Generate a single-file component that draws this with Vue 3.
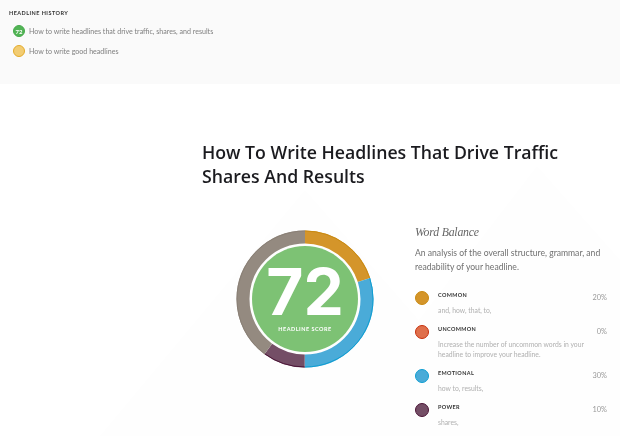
<script setup>
// Word balance data for the analysed headline
const history = [
  { score: '72', text: 'How to write headlines that drive traffic, shares, and results', tone: 'good' },
  { score: '', text: 'How to write good headlines', tone: 'okay' }
]

const words = [
  { name: 'COMMON', hint: ['and, how, that, to,'], pct: '20%', fill: '#d4952a', edge: '#c98a12' },
  { name: 'UNCOMMON', hint: ['Increase the number of uncommon words in your', 'headline to improve your headline.'], pct: '0%', fill: '#df6f4b', edge: '#c7300c' },
  { name: 'EMOTIONAL', hint: ['how to, results,'], pct: '30%', fill: '#4aabd8', edge: '#0e9ed2' },
  { name: 'POWER', hint: ['shares,'], pct: '10%', fill: '#744e66', edge: '#4b1436' }
]

// Ring segments, in percent of the circle, clockwise from the top
const radius = 62
const rimRadius = 68
const ring = [
  { color: '#d4952a', edge: '#c98a12', start: 0, size: 20 },
  { color: '#4aabd8', edge: '#0e9ed2', start: 20, size: 30 },
  { color: '#744e66', edge: '#4b1436', start: 50, size: 10 },
  { color: '#948a80', edge: '#8a8076', start: 60, size: 40 }
]
const dash = (seg, r) => `${(seg.size / 100) * 2 * Math.PI * r} ${2 * Math.PI * r}`
const offset = (seg, r) => -(seg.start / 100) * 2 * Math.PI * r
</script>

<template>
  <div class="page">
    <svg class="backdrop" viewBox="0 0 620 436" aria-hidden="true">
      <polygon points="100,436 305,190 520,436" fill="#fefefe" />
      <polygon points="330,436 537,166 620,260 620,436" fill="#fefefe" />
    </svg>

    <header class="history">
      <h4 class="history-title">HEADLINE HISTORY</h4>
      <ul class="history-list">
        <li v-for="item in history" :key="item.text" class="history-row">
          <span class="badge" :class="item.tone">{{ item.score }}</span>
          <span>{{ item.text }}</span>
        </li>
      </ul>
    </header>

    <main class="result">
      <h1 class="headline">How To Write Headlines That Drive Traffic<br />Shares And Results</h1>

      <div class="panels">
        <div class="score">
          <svg class="donut" width="138" height="138" viewBox="0 0 138 138">
            <circle cx="69" cy="69" r="53" fill="#7dc274" />
            <g v-for="seg in ring" :key="seg.color" fill="none" transform="rotate(-90 69 69)">
              <circle
                cx="69"
                cy="69"
                :r="radius"
                :stroke="seg.color"
                stroke-width="13"
                :stroke-dasharray="dash(seg, radius)"
                :stroke-dashoffset="offset(seg, radius)"
              />
              <circle
                cx="69"
                cy="69"
                :r="rimRadius"
                :stroke="seg.edge"
                stroke-width="1"
                :stroke-dasharray="dash(seg, rimRadius)"
                :stroke-dashoffset="offset(seg, rimRadius)"
              />
            </g>
          </svg>
          <div class="score-label">
            <span class="score-value">72</span>
            <span class="score-caption">HEADLINE SCORE</span>
          </div>
        </div>

        <section class="balance">
          <h2 class="balance-title">Word Balance</h2>
          <p class="balance-intro">An analysis of the overall structure, grammar, and readability of your headline.</p>
          <div v-for="word in words" :key="word.name" class="word">
            <span class="dot" :style="{ background: word.fill, borderColor: word.edge }"></span>
            <div class="word-body">
              <div class="word-name">{{ word.name }}</div>
              <div class="word-hint">
                <div v-for="line in word.hint" :key="line">{{ line }}</div>
              </div>
            </div>
            <span class="word-pct">{{ word.pct }}</span>
          </div>
        </section>
      </div>
    </main>
  </div>
</template>

<style>
html, body {
  margin: 0;
  background: #ffffff;
  overflow: hidden;
}
</style>

<style scoped>
.page {
  position: relative;
  width: 620px;
  height: 436px;
  overflow: hidden;
  font-family: Lato, "Open Sans", sans-serif;
  background: #ffffff;
  filter: blur(0.35px);
}

.backdrop {
  position: absolute;
  left: 0;
  top: 0;
  width: 620px;
  height: 436px;
}

/* History strip */
.history {
  position: relative;
  height: 84px;
  box-sizing: border-box;
  padding: 10px 9px 0;
  background: #fafafa;
}

.history-title {
  margin: 0 0 8px;
  font-size: 5.5px;
  line-height: 7px;
  font-weight: 700;
  letter-spacing: 0.45px;
  color: #333333;
}

.history-list {
  list-style: none;
  margin: 0;
  padding: 0 0 0 4px;
}

.history-row {
  display: flex;
  align-items: center;
  gap: 4px;
  height: 12px;
  margin-bottom: 8px;
  font-size: 7.1px;
  color: #808080;
}

.badge {
  display: flex;
  align-items: center;
  justify-content: center;
  box-sizing: border-box;
  width: 12px;
  height: 12px;
  border-radius: 50%;
  font-size: 6px;
  font-weight: 700;
  color: #ffffff;
}

.badge.good {
  background: #52b455;
  border: 1px solid #46aa4c;
}

.badge.okay {
  background: #f2cc72;
  border: 1px solid #e4ab2a;
}

/* Main result */
.result {
  position: relative;
  padding: 56px 0 0 202px;
}

.headline {
  margin: 0;
  font-family: "Open Sans", sans-serif;
  font-size: 17.7px;
  line-height: 24px;
  font-weight: 600;
  color: #1b1b1f;
}

.panels {
  display: flex;
  margin: 36px 0 0 34px;
}

.score {
  position: relative;
  flex: none;
  width: 138px;
  height: 138px;
  margin: 6px 41px 0 0;
}

.donut {
  display: block;
}

.score-label {
  position: absolute;
  left: 0;
  right: 0;
  top: 33px;
  display: flex;
  flex-direction: column;
  align-items: center;
  color: #ffffff;
}

.score-value {
  font-family: Inter, sans-serif;
  font-size: 64px;
  line-height: 58px;
  font-weight: 700;
}

.score-caption {
  margin-top: 5px;
  font-size: 5.5px;
  line-height: 7px;
  font-weight: 700;
  letter-spacing: 0.5px;
}

/* Word balance column */
.balance {
  width: 192px;
}

.balance-title {
  margin: 0 0 6px;
  font-family: "Liberation Serif", serif;
  font-size: 11.8px;
  line-height: 16px;
  font-style: italic;
  font-weight: 400;
  letter-spacing: -0.2px;
  color: #666666;
}

.balance-intro {
  margin: 0 0 18px;
  font-size: 8.6px;
  line-height: 14px;
  color: #707070;
}

.word {
  display: flex;
  align-items: flex-start;
  margin-bottom: 11px;
}

.dot {
  flex: none;
  box-sizing: border-box;
  width: 14px;
  height: 14px;
  margin-top: -1.5px;
  border: 1.5px solid;
  border-radius: 50%;
}

.word-body {
  flex: 1;
  margin-left: 9px;
}

.word-name {
  font-size: 5.5px;
  line-height: 7px;
  font-weight: 700;
  letter-spacing: 0.35px;
  color: #333333;
}

.word-hint {
  margin-top: 6px;
  font-size: 6.8px;
  line-height: 10px;
  color: #b0b0b0;
}

.word-pct {
  font-size: 7.4px;
  line-height: 11px;
  color: #999999;
}
</style>
